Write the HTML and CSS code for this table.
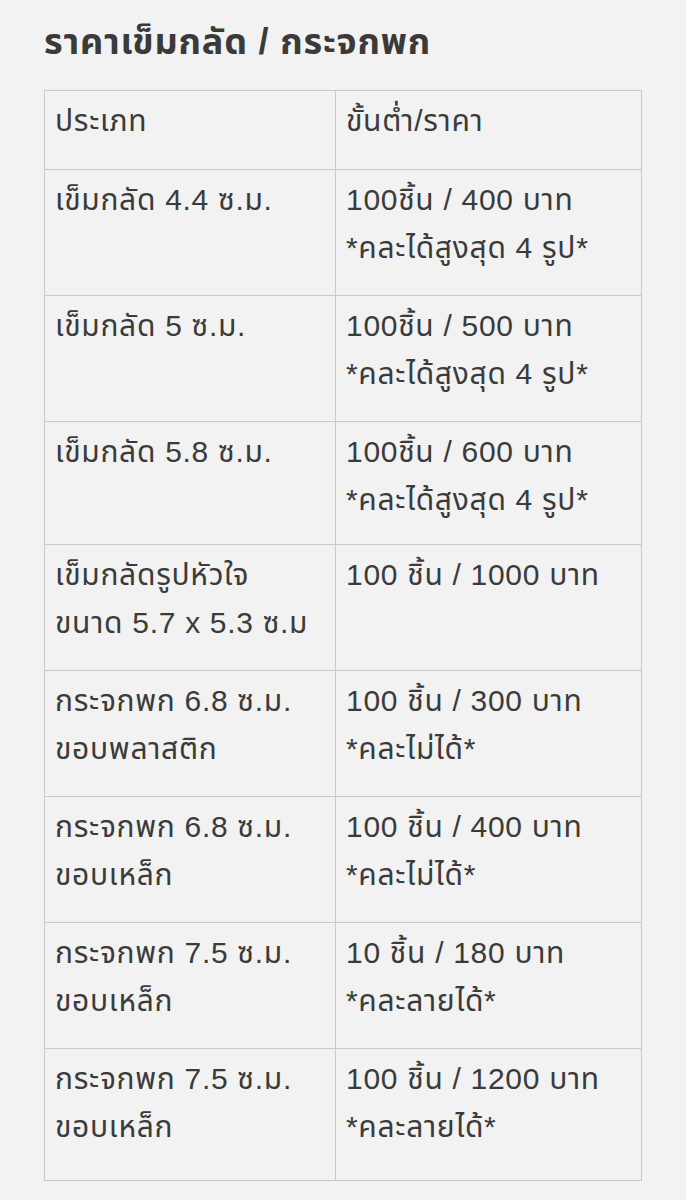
FILE: index.html
```html
<!DOCTYPE html>
<html lang="th">
<head>
<meta charset="utf-8">
<title>ราคาเข็มกลัด / กระจกพก</title>
<link rel="stylesheet" href="styles.css">
</head>
<body>
<main class="page">
  <h1 class="title">ราคาเข็มกลัด / กระจกพก</h1>
  <table class="price-table">
    <tbody>
      <tr class="row-head">
        <td class="col-type"><p>ประเภท</p></td>
        <td class="col-price"><p>ขั้นต่ำ/ราคา</p></td>
      </tr>
      <tr class="row">
        <td><p>เข็มกลัด 4.4 ซ.ม.</p></td>
        <td><p>100ชิ้น / 400 บาท<br>*คละได้สูงสุด 4 รูป*</p></td>
      </tr>
      <tr class="row">
        <td><p>เข็มกลัด 5 ซ.ม.</p></td>
        <td><p>100ชิ้น / 500 บาท<br>*คละได้สูงสุด 4 รูป*</p></td>
      </tr>
      <tr class="row row-short">
        <td><p>เข็มกลัด 5.8 ซ.ม.</p></td>
        <td><p>100ชิ้น / 600 บาท<br>*คละได้สูงสุด 4 รูป*</p></td>
      </tr>
      <tr class="row">
        <td><p>เข็มกลัดรูปหัวใจ<br>ขนาด 5.7 x 5.3 ซ.ม</p></td>
        <td><p>100 ชิ้น / 1000 บาท</p></td>
      </tr>
      <tr class="row">
        <td><p>กระจกพก 6.8 ซ.ม.<br>ขอบพลาสติก</p></td>
        <td><p>100 ชิ้น / 300 บาท<br>*คละไม่ได้*</p></td>
      </tr>
      <tr class="row">
        <td><p>กระจกพก 6.8 ซ.ม.<br>ขอบเหล็ก</p></td>
        <td><p>100 ชิ้น / 400 บาท<br>*คละไม่ได้*</p></td>
      </tr>
      <tr class="row">
        <td><p>กระจกพก 7.5 ซ.ม.<br>ขอบเหล็ก</p></td>
        <td><p>10 ชิ้น / 180 บาท<br>*คละลายได้*</p></td>
      </tr>
      <tr class="row row-tall">
        <td><p>กระจกพก 7.5 ซ.ม.<br>ขอบเหล็ก</p></td>
        <td><p>100 ชิ้น / 1200 บาท<br>*คละลายได้*</p></td>
      </tr>
    </tbody>
  </table>
</main>
</body>
</html>
```
FILE: styles.css
```css
html, body {
  margin: 0;
  padding: 0;
}
body {
  background: #f2f2f2;
  color: #3b3b3b;
  font-family: "Liberation Sans", "Noto Sans Thai", "Thonburi", "Noto Sans", sans-serif;
}
.page {
  padding: 13px 44px 0 44px;
  width: 598px;
}
.title {
  margin: 0 0 19px 0;
  font-size: 36px;
  line-height: 58px;
  font-weight: bold;
  letter-spacing: 0.8px;
  color: #3a3a3a;
}
.price-table {
  width: 598px;
  border-collapse: collapse;
  table-layout: fixed;
}
.price-table td {
  border: 1px solid #c9c9c9;
  vertical-align: top;
  padding: 6px 10px 0 10px;
  font-size: 30px;
  line-height: 48px;
  letter-spacing: 0.7px;
}
.price-table td p {
  margin: 0;
}
.col-type {
  width: 270px;
}
.row-head td {
  height: 72px;
}
.row td {
  height: 119px;
}
.row-short td {
  height: 116px;
}
.row-tall td {
  height: 125px;
}
```
